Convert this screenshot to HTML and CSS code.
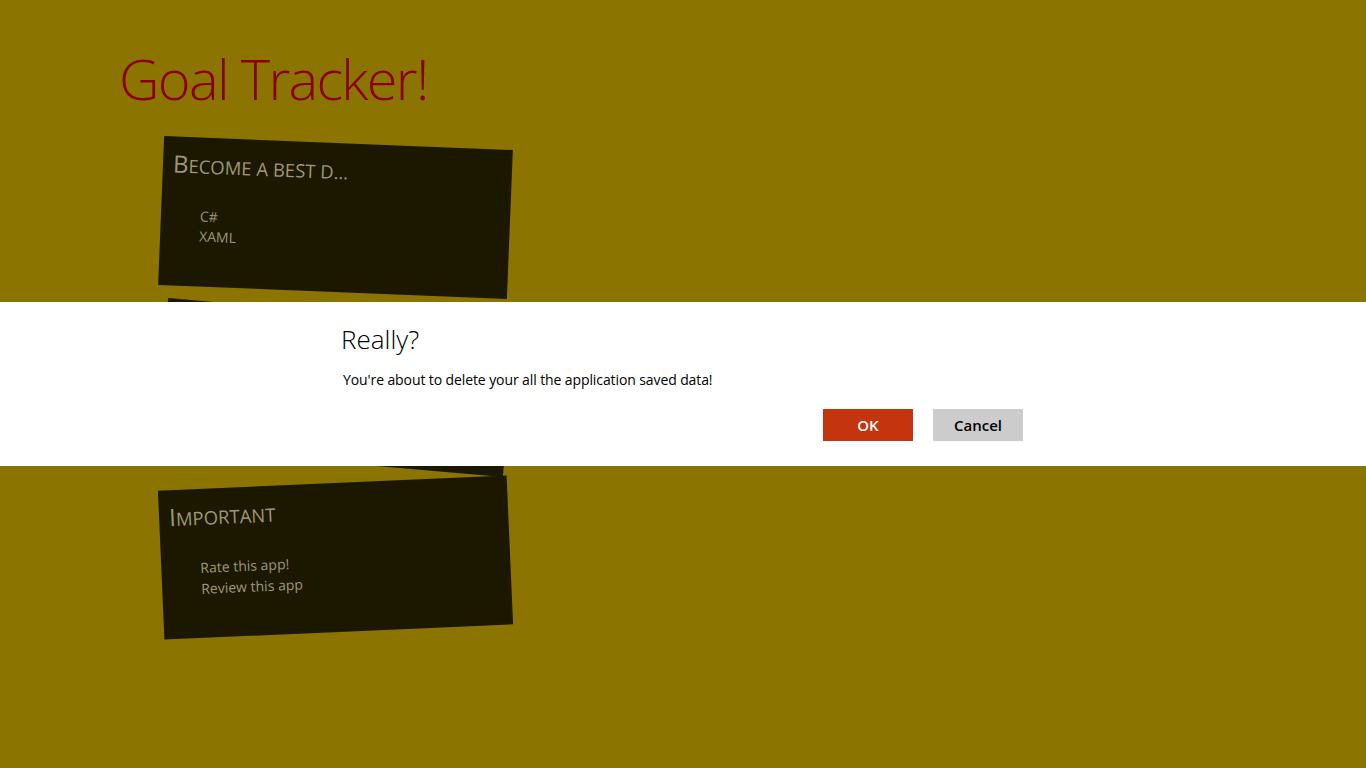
FILE: index.html
```html
<!DOCTYPE html>
<html lang="en">
<head>
<meta charset="utf-8">
<title>Goal Tracker!</title>
<link rel="stylesheet" href="styles.css">
</head>
<body>
<main class="page">
  <h1 class="title">Goal Tracker!</h1>
  <section class="cards">
    <article class="card card-a">
      <h2 class="card-title">Become a best d...</h2>
      <ul class="card-items">
        <li>C#</li>
        <li>XAML</li>
      </ul>
    </article>
    <article class="card card-b">
      <h2 class="card-title">Learn</h2>
      <ul class="card-items">
        <li>Windows 8</li>
      </ul>
    </article>
    <article class="card card-c">
      <h2 class="card-title">Important</h2>
      <ul class="card-items items-lg">
        <li>Rate this app!</li>
        <li>Review this app</li>
      </ul>
    </article>
  </section>
</main>
<div class="dialog" role="dialog">
  <div class="dialog-inner">
    <h2 class="dialog-title">Really?</h2>
    <p class="dialog-msg">You're about to delete your all the application saved data!</p>
    <div class="dialog-actions">
      <button class="btn btn-ok">OK</button>
      <button class="btn btn-cancel">Cancel</button>
    </div>
  </div>
</div>
</body>
</html>
```
FILE: styles.css
```css
html, body {
  margin: 0;
  padding: 0;
}
body {
  width: 1366px;
  height: 768px;
  overflow: hidden;
  background: #8b7500;
  font-family: "Open Sans", "Noto Sans", sans-serif;
  position: relative;
}
.page {
  padding: 45px 0 0 119px;
}
.title {
  margin: 0;
  font-weight: 300;
  font-size: 56px;
  line-height: 67px;
  color: #8b0000;
  letter-spacing: -1.7px;
}
.cards {
  display: flex;
  flex-direction: column;
  gap: 21px;
  margin: 31px 0 0 42px;
}
.card {
  box-sizing: border-box;
  width: 349px;
  height: 149px;
  background: #1c1800;
  color: #9e9676;
  padding: 11px 10px;
}
.card-a { transform: rotate(2.3deg); }
.card-b { transform: rotate(5deg); }
.card-c { transform: rotate(-2.5deg); }
.card-title {
  margin: 0;
  font-weight: 400;
  font-size: 18.5px;
  line-height: 32px;
  text-transform: uppercase;
  letter-spacing: 0;
}
.card-title::first-letter {
  font-size: 24px;
}
.card-items {
  list-style: none;
  margin: 24px 0 0 0;
  padding: 0 0 0 29px;
  font-size: 14px;
  line-height: 20px;
}
.items-lg {
  font-size: 14px;
  line-height: 21px;
  margin-top: 23px;
  padding-left: 29px;
}
.dialog {
  position: absolute;
  left: 0;
  right: 0;
  top: 302px;
  height: 164px;
  background: #ffffff;
}
.dialog-inner {
  box-sizing: border-box;
  width: 684px;
  margin: 0 auto;
  padding: 19px 2px 0 0;
}
.dialog-title {
  margin: 0;
  font-weight: 300;
  font-size: 26px;
  line-height: 36px;
  color: #000;
}
.dialog-msg {
  margin: 13px 0 0 2px;
  font-size: 14px;
  line-height: 20px;
  letter-spacing: -0.1px;
  color: #000;
}
.dialog-actions {
  display: flex;
  justify-content: flex-end;
  gap: 20px;
  margin-top: 19px;
}
.btn {
  width: 90px;
  height: 32px;
  border: 0;
  padding: 0;
  font-family: "Open Sans", "Noto Sans", sans-serif;
  font-size: 15px;
  font-weight: 600;
}
.btn-ok {
  background: #c4350f;
  color: #ffffff;
}
.btn-cancel {
  background: #cccccc;
  color: #000000;
}
```
